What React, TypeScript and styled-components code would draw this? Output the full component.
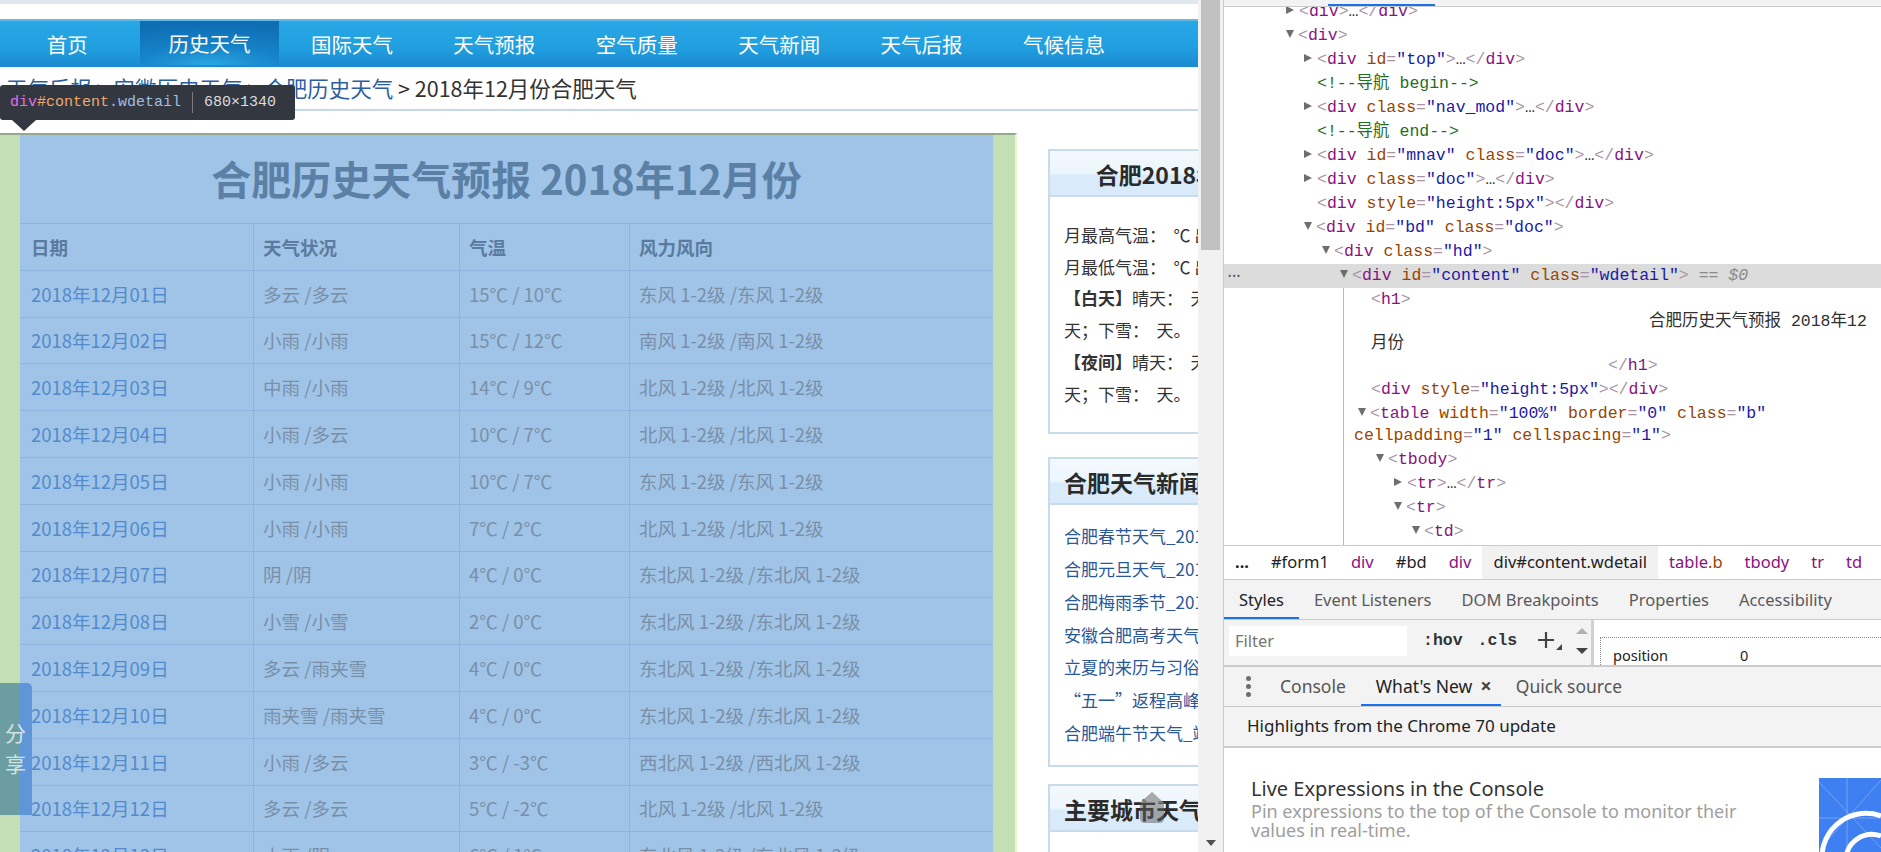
import React from "react";
import styled, { createGlobalStyle, css } from "styled-components";

const CJK = `"Noto Sans CJK SC", "Noto Sans", sans-serif`;
const MONO = `"Liberation Mono", "DejaVu Sans Mono", "Noto Sans CJK SC", monospace`;
const UI = `"Noto Sans", "Noto Sans CJK SC", sans-serif`;

const GlobalStyle = createGlobalStyle`
  *, *::before, *::after { box-sizing: border-box; }
  html, body { margin: 0; padding: 0; width: 1881px; height: 852px; overflow: hidden; background: #fff; }
  body { font-family: ${CJK}; }
  #root { width: 1881px; height: 852px; }
`;

const Screen = styled.div`
  display: flex;
  width: 1881px;
  height: 852px;
  overflow: hidden;
`;

/* ---------------- web page ---------------- */

const Page = styled.div`
  position: relative;
  flex: none;
  width: 1198px;
  height: 852px;
  overflow: hidden;
  background: #fff;
  font-family: ${CJK};
`;

const TopRule = styled.div`
  height: 4px;
  background: #dfe7ef;
`;

const Nav = styled.nav`
  display: flex;
  margin-top: 15px;
  height: 48px;
  border-top: 2px solid #5fbbe9;
  background: linear-gradient(#28a6e5 0%, #21a0e0 55%, #1a8ad0 100%);
  overflow: hidden;
`;

const NavList = styled.div`
  display: flex;
  margin-left: -4px;
`;

const NavItem = styled.a<{ $active?: boolean }>`
  flex: none;
  display: flex;
  align-items: center;
  justify-content: center;
  width: 142.4px;
  color: #fff;
  font-size: 20.5px;
  text-decoration: none;
  ${(p) =>
    p.$active &&
    css`
      width: 138.4px;
      margin: 0 2px 2px;
      background: radial-gradient(120% 95% at 50% 100%, #2aa6e4 0%, #1682c7 45%, #0f6db3 100%);
    `}
`;

const Crumbs = styled.div`
  height: 44px;
  line-height: 42px;
  padding-left: 6px;
  border-bottom: 2px solid #c5d8e7;
  font-size: 21.5px;
  color: #333;
  white-space: nowrap;
`;

const CrumbLink = styled.a`
  color: #2d5f9f;
  text-decoration: none;
`;

const ContentRow = styled.div`
  display: flex;
  align-items: flex-start;
  margin-top: 22px;
`;

const MainCol = styled.div`
  flex: none;
  width: 1017px;
  padding: 0 22px 0 20px;
  border-top: 2px solid #97a88f;
  border-right: 2px solid #f4f0c6;
  background: #c4dfb6;
`;

const Detail = styled.div`
  background: #9fc4e7;
`;

const Title = styled.h1`
  margin: 0;
  height: 88px;
  line-height: 86px;
  text-align: center;
  font-size: 40px;
  font-weight: 700;
  color: #5b80a6;
  white-space: nowrap;
`;

const WeatherTable = styled.table`
  width: 100%;
  border-collapse: separate;
  border-spacing: 0;
  table-layout: fixed;
  font-size: 18.5px;
`;

const TRow = styled.tr`
  height: 46.8px;
`;

const Cell = styled.td<{ $kind: "head" | "date" | "plain" }>`
  padding: 0 0 0 9px;
  border-top: 1px solid #8cb4de;
  border-left: 1px solid #8cb4de;
  white-space: nowrap;
  overflow: hidden;
  vertical-align: middle;
  &:first-child {
    border-left: none;
    padding-left: 11px;
  }
  ${(p) =>
    p.$kind === "head"
      ? css`
          font-weight: 700;
          color: #5a7b9f;
        `
      : p.$kind === "date"
      ? css`
          color: #538acd;
        `
      : css`
          color: #7a8fa7;
        `}
`;

const Sidebar = styled.div`
  flex: none;
  width: 430px;
  margin-left: 31px;
  margin-top: 16px;
`;

const SideBox = styled.div<{ $mt?: number }>`
  border: 2px solid #c8dbea;
  background: #fff;
  margin-top: ${(p) => p.$mt ?? 0}px;
`;

const BoxHead = styled.div<{ $center?: boolean }>`
  height: 46px;
  line-height: 47px;
  padding: 0 14px;
  border-bottom: 2px solid #c8dbea;
  background: linear-gradient(#f3f9fe 0%, #ecf6fd 50%, #d9ebfa 56%, #d9ebfa 100%);
  font-size: 23px;
  font-weight: 700;
  color: #2b2b2b;
  white-space: nowrap;
  text-align: ${(p) => (p.$center ? "center" : "left")};
`;

const StatBody = styled.div`
  padding: 22px 0 23px 14px;
  font-size: 17px;
  line-height: 31.7px;
  color: #333;
`;

const StatLine = styled.div`
  white-space: nowrap;
`;

const NewsBody = styled.ul`
  margin: 0;
  padding: 15px 0 15px 14px;
  list-style: none;
  font-size: 17px;
  line-height: 32.8px;
`;

const NewsLink = styled.li`
  color: #28579a;
  white-space: nowrap;
`;

const CityBody = styled.div`
  height: 120px;
`;

const ShareTab = styled.div`
  position: absolute;
  left: 0;
  top: 683px;
  width: 32px;
  height: 132px;
  padding: 34px 0 0 5px;
  border-top-right-radius: 5px;
  background: linear-gradient(to right, #6c9da2 0, #6c9da2 20px, #5f95d9 20px);
  color: #d3e3e0;
  font-size: 21px;
  line-height: 31px;
`;

const ShareChar = styled.span`
  display: block;
`;

const ToTop = styled.div`
  position: absolute;
  left: 1139px;
  top: 791px;
  width: 26px;
  height: 33px;
`;

const Tip = styled.div`
  position: absolute;
  left: 0;
  top: 85px;
  width: 295px;
  height: 35px;
  display: flex;
  align-items: center;
  padding-left: 10px;
  border-radius: 3px;
  background: #333740;
  font-family: ${MONO};
  font-size: 15px;
  white-space: nowrap;
  &::after {
    content: "";
    position: absolute;
    left: 12px;
    top: 100%;
    border-left: 12px solid transparent;
    border-right: 12px solid transparent;
    border-top: 11px solid #333740;
  }
`;

const TipTag = styled.span`
  color: #e36eec;
`;
const TipId = styled.span`
  color: #f0a86c;
`;
const TipClass = styled.span`
  color: #9fbfe4;
`;
const TipSep = styled.span`
  width: 1px;
  height: 21px;
  margin: 0 11px;
  background: #7a7a7a;
`;
const TipSize = styled.span`
  color: #dcdcdc;
`;

/* ---------------- page scrollbar ---------------- */

const PageScroll = styled.div`
  flex: none;
  width: 25px;
  height: 852px;
  display: flex;
  flex-direction: column;
  align-items: center;
  background: #f1f1f1;
`;

const Thumb = styled.div`
  width: 19px;
  height: 250px;
  margin-right: 1px;
  background: #c1c1c1;
`;

const ScrollSpacer = styled.div`
  flex: 1;
`;

const DownArrow = styled.div`
  width: 0;
  height: 0;
  margin-bottom: 6px;
  border-left: 5.5px solid transparent;
  border-right: 5.5px solid transparent;
  border-top: 6px solid #505050;
`;

/* ---------------- devtools ---------------- */

const DevTools = styled.div`
  flex: 1;
  height: 852px;
  display: flex;
  flex-direction: column;
  border-left: 1px solid #cbcbcb;
  background: #fff;
  font-family: ${UI};
  color: #222;
  overflow: hidden;
`;

const TopStrip = styled.div`
  flex: none;
  height: 7px;
  display: flex;
  align-items: flex-end;
  border-bottom: 1px solid #cbcbcb;
  background: #f3f3f3;
`;

const TopTabLine = styled.div`
  width: 107px;
  height: 2px;
  margin-left: 104px;
  background: #1a73e8;
`;

const Tree = styled.div`
  flex: none;
  height: 538px;
  overflow: hidden;
  font-family: ${MONO};
  font-size: 16.5px;
  color: #222;
`;

const TreeInner = styled.div`
  margin-top: -7px;
`;

const Row = styled.div<{ $level: number; $selected?: boolean }>`
  position: relative;
  padding: 1px 0 1px ${(p) => 75 + p.$level * 18}px;
  line-height: 22px;
  white-space: pre;
  ${(p) =>
    p.$selected &&
    css`
      background: #dcdcdc;
    `}
`;

const Twisty = styled.span<{ $open?: boolean }>`
  display: inline-block;
  width: 0;
  height: 0;
  vertical-align: middle;
  position: relative;
  top: -2px;
  ${(p) =>
    p.$open
      ? css`
          margin-left: -13px;
          margin-right: 4px;
          border-left: 4.5px solid transparent;
          border-right: 4.5px solid transparent;
          border-top: 8px solid #6e6e6e;
        `
      : css`
          margin-left: -13px;
          margin-right: 5px;
          border-top: 4.5px solid transparent;
          border-bottom: 4.5px solid transparent;
          border-left: 8px solid #6e6e6e;
        `}
`;

const Cont = styled.div<{ $x: number }>`
  margin-left: ${(p) => p.$x}px;
`;

const Subtree = styled.div`
  position: relative;
  &::before {
    content: "";
    position: absolute;
    left: 119px;
    top: 0;
    bottom: -40px;
    width: 1px;
    background: #a9bccf;
  }
`;

const Gutter = styled.span`
  position: absolute;
  left: 4px;
  top: 0;
  font-family: ${UI};
  font-size: 9px;
  line-height: 24px;
  letter-spacing: 1px;
  color: #555;
`;

const Br = styled.span`
  color: #a894a6;
`;
const Tg = styled.span`
  color: #881280;
`;
const An = styled.span`
  color: #994500;
`;
const Av = styled.span`
  color: #1a1aa6;
`;
const Cm = styled.span`
  color: #236e25;
`;
const Tx = styled.span`
  color: #303030;
`;
const Muted = styled.span`
  color: #8a8a8a;
`;
const Dollar = styled.span`
  color: #8a8a8a;
  font-style: italic;
`;

const CrumbBar = styled.div`
  flex: none;
  height: 34px;
  display: flex;
  border-top: 1px solid #cbcbcb;
  font-size: 16.5px;
  white-space: nowrap;
`;

const DCrumb = styled.span<{ $selected?: boolean }>`
  display: flex;
  align-items: center;
  padding: 0 11px 2px;
  color: #222;
  ${(p) =>
    p.$selected &&
    css`
      background: #f1f1f1;
    `}
`;

const CTag = styled.span`
  color: #881280;
`;
const CClass = styled.span`
  color: #994500;
`;

const PaneTabs = styled.div`
  flex: none;
  height: 41px;
  display: flex;
  border-top: 1px solid #cbcbcb;
  border-bottom: 1px solid #cbcbcb;
  background: #f3f3f3;
  font-size: 16.5px;
  white-space: nowrap;
`;

const PaneTab = styled.span<{ $active?: boolean }>`
  display: flex;
  align-items: center;
  padding: 0 15px 1px;
  color: #5a5a5a;
  ${(p) =>
    p.$active &&
    css`
      color: #222;
      box-shadow: inset 0 -2px 0 #1a73e8;
    `}
`;

const StylesBar = styled.div`
  flex: none;
  height: 45px;
  display: flex;
`;

const StylesLeft = styled.div`
  flex: none;
  width: 370px;
  display: flex;
  align-items: center;
  padding: 0 0 4px 5px;
  background: #f3f3f3;
  border-right: 3px solid #d0d0d0;
`;

const FilterBox = styled.div`
  width: 178px;
  height: 30px;
  padding-left: 6px;
  line-height: 30px;
  background: #fff;
  font-size: 16.5px;
  color: #757575;
`;

const ToolText = styled.span<{ $ml: number }>`
  margin-left: ${(p) => p.$ml}px;
  font-family: ${MONO};
  font-weight: 700;
  font-size: 16.5px;
  color: #333;
`;

const PlusIcon = styled.svg`
  margin-left: 20px;
  flex: none;
`;

const ArrowsCol = styled.div`
  display: flex;
  flex-direction: column;
  gap: 14px;
  margin-left: 13px;
`;

const SmallTri = styled.span<{ $up?: boolean }>`
  width: 0;
  height: 0;
  border-left: 6px solid transparent;
  border-right: 6px solid transparent;
  ${(p) =>
    p.$up
      ? css`
          border-bottom: 6px solid #b0b0b0;
        `
      : css`
          border-top: 6px solid #444;
        `}
`;

const StylesRight = styled.div`
  flex: 1;
  padding: 17px 0 0 6px;
  background: #fff;
  overflow: hidden;
`;

const BoxModel = styled.div`
  display: flex;
  align-items: center;
  height: 40px;
  padding: 6px 0 0 12px;
  align-items: flex-start;
  line-height: 22px;
  border-top: 1px dotted #8a8a8a;
  border-left: 1px dotted #8a8a8a;
  font-size: 14.5px;
  color: #222;
`;

const BoxZero = styled.span`
  margin-left: 72px;
`;

const Drawer = styled.div`
  flex: 1;
  display: flex;
  flex-direction: column;
  border-top: 2px solid #cbcbcb;
`;

const DrawerTabs = styled.div`
  flex: none;
  height: 40px;
  display: flex;
  align-items: stretch;
  border-bottom: 1px solid #cbcbcb;
  background: #f3f3f3;
  font-size: 17.5px;
  white-space: nowrap;
`;

const MoreDots = styled.span`
  display: flex;
  flex-direction: column;
  justify-content: center;
  gap: 3px;
  margin: 0 14px 0 22px;
`;

const Dot = styled.span`
  width: 5px;
  height: 5px;
  border-radius: 50%;
  background: #6e6e6e;
`;

const DrawerTab = styled.span<{ $active?: boolean }>`
  display: flex;
  align-items: center;
  padding: 0 15px 2px;
  color: #555;
  ${(p) =>
    p.$active &&
    css`
      color: #222;
      padding-right: 9px;
      box-shadow: inset 0 -2px 0 #1a73e8;
    `}
`;

const CloseX = styled.span`
  margin-left: 8px;
  font-size: 20px;
  font-weight: 700;
  color: #444;
`;

const Highlights = styled.div`
  flex: none;
  height: 41px;
  padding-left: 23px;
  line-height: 38px;
  border-bottom: 2px solid #cbcbcb;
  background: #f3f3f3;
  font-size: 17px;
  color: #222;
`;

const NewBody = styled.div`
  flex: 1;
  display: flex;
  gap: 28px;
  padding: 28px 0 0 27px;
  overflow: hidden;
`;

const NewText = styled.div`
  flex: 1;
`;

const NewTitle = styled.div`
  font-size: 20px;
  line-height: 26px;
  color: #333;
`;

const NewDesc = styled.div`
  font-size: 18px;
  line-height: 18.5px;
  color: #9e9e9e;
`;

const NewPic = styled.svg`
  flex: none;
  margin-top: 2px;
`;

/* ---------------- data ---------------- */

const navItems = ["首页", "历史天气", "国际天气", "天气预报", "空气质量", "天气新闻", "天气后报", "气候信息"];

const weatherRows: string[][] = [
  ["2018年12月01日", "多云 /多云", "15℃ / 10℃", "东风 1-2级 /东风 1-2级"],
  ["2018年12月02日", "小雨 /小雨", "15℃ / 12℃", "南风 1-2级 /南风 1-2级"],
  ["2018年12月03日", "中雨 /小雨", "14℃ / 9℃", "北风 1-2级 /北风 1-2级"],
  ["2018年12月04日", "小雨 /多云", "10℃ / 7℃", "北风 1-2级 /北风 1-2级"],
  ["2018年12月05日", "小雨 /小雨", "10℃ / 7℃", "东风 1-2级 /东风 1-2级"],
  ["2018年12月06日", "小雨 /小雨", "7℃ / 2℃", "北风 1-2级 /北风 1-2级"],
  ["2018年12月07日", "阴 /阴", "4℃ / 0℃", "东北风 1-2级 /东北风 1-2级"],
  ["2018年12月08日", "小雪 /小雪", "2℃ / 0℃", "东北风 1-2级 /东北风 1-2级"],
  ["2018年12月09日", "多云 /雨夹雪", "4℃ / 0℃", "东北风 1-2级 /东北风 1-2级"],
  ["2018年12月10日", "雨夹雪 /雨夹雪", "4℃ / 0℃", "东北风 1-2级 /东北风 1-2级"],
  ["2018年12月11日", "小雨 /多云", "3℃ / -3℃", "西北风 1-2级 /西北风 1-2级"],
  ["2018年12月12日", "多云 /多云", "5℃ / -2℃", "北风 1-2级 /北风 1-2级"],
  ["2018年12月13日", "小雨 /阴", "6℃ / 1℃", "东北风 1-2级 /东北风 1-2级"],
];

const news = [
  "合肥春节天气_2019年合肥春节天气预报",
  "合肥元旦天气_2019年合肥元旦天气预报",
  "合肥梅雨季节_2018年合肥入梅时间",
  "安徽合肥高考天气预报",
  "立夏的来历与习俗_立夏节气",
  "“五一”返程高峰期天气",
  "合肥端午节天气_端午节天气预报",
];

/* ---------------- helpers ---------------- */

type Attr = [string, string];

const Open: React.FC<{ name: string; attrs?: Attr[]; end?: boolean }> = ({ name, attrs = [], end = true }) => (
  <>
    <Br>&lt;</Br>
    <Tg>{name}</Tg>
    {attrs.map(([k, v]) => (
      <React.Fragment key={k}>
        {" "}
        <An>{k}</An>
        <Br>=</Br>
        <Av>"{v}"</Av>
      </React.Fragment>
    ))}
    {end && <Br>&gt;</Br>}
  </>
);

const Close: React.FC<{ name: string }> = ({ name }) => (
  <>
    <Br>&lt;/</Br>
    <Tg>{name}</Tg>
    <Br>&gt;</Br>
  </>
);

const Collapsed: React.FC<{ name: string; attrs?: Attr[] }> = ({ name, attrs }) => (
  <>
    <Open name={name} attrs={attrs} />
    <Tx>…</Tx>
    <Close name={name} />
  </>
);

/* ---------------- app ---------------- */

export default function App() {
  return (
    <>
      <GlobalStyle />
      <Screen>
        <Page>
          <TopRule />
          <Nav>
            <NavList>
              {navItems.map((n, i) => (
                <NavItem key={n} $active={i === 1}>
                  {n}
                </NavItem>
              ))}
            </NavList>
          </Nav>
          <Crumbs>
            <CrumbLink>天气后报</CrumbLink> &gt; <CrumbLink>安徽历史天气</CrumbLink> &gt;{" "}
            <CrumbLink>合肥历史天气</CrumbLink> &gt; 2018年12月份合肥天气
          </Crumbs>
          <ContentRow>
            <MainCol>
              <Detail>
                <Title>合肥历史天气预报 2018年12月份</Title>
                <WeatherTable>
                  <colgroup>
                    <col style={{ width: 233 }} />
                    <col style={{ width: 206 }} />
                    <col style={{ width: 170 }} />
                    <col />
                  </colgroup>
                  <tbody>
                    <TRow>
                      <Cell $kind="head">日期</Cell>
                      <Cell $kind="head">天气状况</Cell>
                      <Cell $kind="head">气温</Cell>
                      <Cell $kind="head">风力风向</Cell>
                    </TRow>
                    {weatherRows.map((r) => (
                      <TRow key={r[0]}>
                        <Cell $kind="date">{r[0]}</Cell>
                        <Cell $kind="plain">{r[1]}</Cell>
                        <Cell $kind="plain">{r[2]}</Cell>
                        <Cell $kind="plain">{r[3]}</Cell>
                      </TRow>
                    ))}
                  </tbody>
                </WeatherTable>
              </Detail>
            </MainCol>
            <Sidebar>
              <SideBox>
                <BoxHead $center>合肥2018年12月份天气情况统计</BoxHead>
                <StatBody>
                  <StatLine>月最高气温：&nbsp;&nbsp;℃ 出现日期：</StatLine>
                  <StatLine>月最低气温：&nbsp;&nbsp;℃ 出现日期：</StatLine>
                  <StatLine>
                    <b>【白天】</b>晴天：&nbsp;&nbsp;天；多云：&nbsp;&nbsp;天；阴天：&nbsp;&nbsp;天；下雨：
                  </StatLine>
                  <StatLine>天；下雪：&nbsp;&nbsp;天。</StatLine>
                  <StatLine>
                    <b>【夜间】</b>晴天：&nbsp;&nbsp;天；多云：&nbsp;&nbsp;天；阴天：&nbsp;&nbsp;天；下雨：
                  </StatLine>
                  <StatLine>天；下雪：&nbsp;&nbsp;天。</StatLine>
                </StatBody>
              </SideBox>
              <SideBox $mt={23}>
                <BoxHead>合肥天气新闻</BoxHead>
                <NewsBody>
                  {news.map((n) => (
                    <NewsLink key={n}>{n}</NewsLink>
                  ))}
                </NewsBody>
              </SideBox>
              <SideBox $mt={17}>
                <BoxHead>主要城市天气</BoxHead>
                <CityBody />
              </SideBox>
            </Sidebar>
          </ContentRow>

          <ToTop>
            <svg width="26" height="33" viewBox="0 0 26 33">
              <path d="M13 1 L25 12 L25 27 Q25 32 20 32 L6 32 Q1 32 1 27 L1 12 Z" fill="rgba(95,95,95,0.5)" />
              <path d="M13 1 L25 12 L1 12 Z" fill="rgba(170,170,170,0.55)" />
            </svg>
          </ToTop>

          <ShareTab>
            <ShareChar>分</ShareChar>
            <ShareChar>享</ShareChar>
          </ShareTab>

          <Tip>
            <TipTag>div</TipTag>
            <TipId>#content</TipId>
            <TipClass>.wdetail</TipClass>
            <TipSep />
            <TipSize>680×1340</TipSize>
          </Tip>
        </Page>

        <PageScroll>
          <Thumb />
          <ScrollSpacer />
          <DownArrow />
        </PageScroll>

        <DevTools>
          <TopStrip>
            <TopTabLine />
          </TopStrip>
          <Tree>
            <TreeInner>
              <Row $level={0}>
                <Twisty />
                <Collapsed name="div" />
              </Row>
              <Row $level={0}>
                <Twisty $open />
                <Open name="div" />
              </Row>
              <Row $level={1}>
                <Twisty />
                <Collapsed name="div" attrs={[["id", "top"]]} />
              </Row>
              <Row $level={1}>
                <Cm>&lt;!--导航 begin--&gt;</Cm>
              </Row>
              <Row $level={1}>
                <Twisty />
                <Collapsed name="div" attrs={[["class", "nav_mod"]]} />
              </Row>
              <Row $level={1}>
                <Cm>&lt;!--导航 end--&gt;</Cm>
              </Row>
              <Row $level={1}>
                <Twisty />
                <Collapsed
                  name="div"
                  attrs={[
                    ["id", "mnav"],
                    ["class", "doc"],
                  ]}
                />
              </Row>
              <Row $level={1}>
                <Twisty />
                <Collapsed name="div" attrs={[["class", "doc"]]} />
              </Row>
              <Row $level={1}>
                <Open name="div" attrs={[["style", "height:5px"]]} />
                <Close name="div" />
              </Row>
              <Row $level={1}>
                <Twisty $open />
                <Open
                  name="div"
                  attrs={[
                    ["id", "bd"],
                    ["class", "doc"],
                  ]}
                />
              </Row>
              <Row $level={2}>
                <Twisty $open />
                <Open name="div" attrs={[["class", "hd"]]} />
              </Row>
              <Row $level={3} $selected>
                <Gutter>•••</Gutter>
                <Twisty $open />
                <Open
                  name="div"
                  attrs={[
                    ["id", "content"],
                    ["class", "wdetail"],
                  ]}
                />
                <Muted> == </Muted>
                <Dollar>$0</Dollar>
              </Row>
              <Subtree>
                <Row $level={4}>
                  <Open name="h1" />
                  <Cont $x={278}>
                    <Tx>合肥历史天气预报 2018年12</Tx>
                  </Cont>
                  <Cont $x={0}>
                    <Tx>月份</Tx>
                  </Cont>
                  <Cont $x={237}>
                    <Close name="h1" />
                  </Cont>
                </Row>
                <Row $level={4}>
                  <Open name="div" attrs={[["style", "height:5px"]]} />
                  <Close name="div" />
                </Row>
                <Row $level={4}>
                  <Twisty $open />
                  <Open
                    name="table"
                    attrs={[
                      ["width", "100%"],
                      ["border", "0"],
                      ["class", "b"],
                    ]}
                    end={false}
                  />
                  <Cont $x={-17}>
                    <An>cellpadding</An>
                    <Br>=</Br>
                    <Av>"1"</Av> <An>cellspacing</An>
                    <Br>=</Br>
                    <Av>"1"</Av>
                    <Br>&gt;</Br>
                  </Cont>
                </Row>
                <Row $level={5}>
                  <Twisty $open />
                  <Open name="tbody" />
                </Row>
                <Row $level={6}>
                  <Twisty />
                  <Collapsed name="tr" />
                </Row>
                <Row $level={6}>
                  <Twisty $open />
                  <Open name="tr" />
                </Row>
                <Row $level={7}>
                  <Twisty $open />
                  <Open name="td" />
                </Row>
                <Row $level={8}>
                  <Tx>2018年12月01日</Tx>
                </Row>
              </Subtree>
            </TreeInner>
          </Tree>

          <CrumbBar>
            <DCrumb>
              <b>...</b>
            </DCrumb>
            <DCrumb>#form1</DCrumb>
            <DCrumb>
              <CTag>div</CTag>
            </DCrumb>
            <DCrumb>#bd</DCrumb>
            <DCrumb>
              <CTag>div</CTag>
            </DCrumb>
            <DCrumb $selected>div#content.wdetail</DCrumb>
            <DCrumb>
              <CTag>table</CTag>
              <CClass>.b</CClass>
            </DCrumb>
            <DCrumb>
              <CTag>tbody</CTag>
            </DCrumb>
            <DCrumb>
              <CTag>tr</CTag>
            </DCrumb>
            <DCrumb>
              <CTag>td</CTag>
            </DCrumb>
          </CrumbBar>

          <PaneTabs>
            <PaneTab $active>Styles</PaneTab>
            <PaneTab>Event Listeners</PaneTab>
            <PaneTab>DOM Breakpoints</PaneTab>
            <PaneTab>Properties</PaneTab>
            <PaneTab>Accessibility</PaneTab>
          </PaneTabs>

          <StylesBar>
            <StylesLeft>
              <FilterBox>Filter</FilterBox>
              <ToolText $ml={16}>:hov</ToolText>
              <ToolText $ml={15}>.cls</ToolText>
              <PlusIcon width="26" height="20" viewBox="0 0 26 20">
                <path d="M9 1 V17 M1 9 H17" stroke="#444" strokeWidth="2.2" fill="none" />
                <path d="M25 13 V19 H19 Z" fill="#444" />
              </PlusIcon>
              <ArrowsCol>
                <SmallTri $up />
                <SmallTri />
              </ArrowsCol>
            </StylesLeft>
            <StylesRight>
              <BoxModel>
                position
                <BoxZero>0</BoxZero>
              </BoxModel>
            </StylesRight>
          </StylesBar>

          <Drawer>
            <DrawerTabs>
              <MoreDots>
                <Dot />
                <Dot />
                <Dot />
              </MoreDots>
              <DrawerTab>Console</DrawerTab>
              <DrawerTab $active>
                What's New<CloseX>×</CloseX>
              </DrawerTab>
              <DrawerTab>Quick source</DrawerTab>
            </DrawerTabs>
            <Highlights>Highlights from the Chrome 70 update</Highlights>
            <NewBody>
              <NewText>
                <NewTitle>Live Expressions in the Console</NewTitle>
                <NewDesc>Pin expressions to the top of the Console to monitor their values in real-time.</NewDesc>
              </NewText>
              <NewPic width="62" height="80" viewBox="0 0 62 80">
                <rect width="62" height="80" fill="#3e7ff2" />
                <g stroke="rgba(255,255,255,0.28)" strokeWidth="1" fill="none">
                  <line x1="0" y1="4" x2="62" y2="70" />
                  <line x1="28" y1="0" x2="28" y2="80" />
                  <line x1="0" y1="40" x2="62" y2="40" />
                  <line x1="62" y1="2" x2="0" y2="72" />
                </g>
                <path d="M3 80 A 44 44 0 0 1 62 38" stroke="#fff" strokeWidth="5" fill="none" />
                <path d="M27 80 A 26 26 0 0 1 62 58" stroke="#fff" strokeWidth="5" fill="none" />
              </NewPic>
            </NewBody>
          </Drawer>
        </DevTools>
      </Screen>
    </>
  );
}
